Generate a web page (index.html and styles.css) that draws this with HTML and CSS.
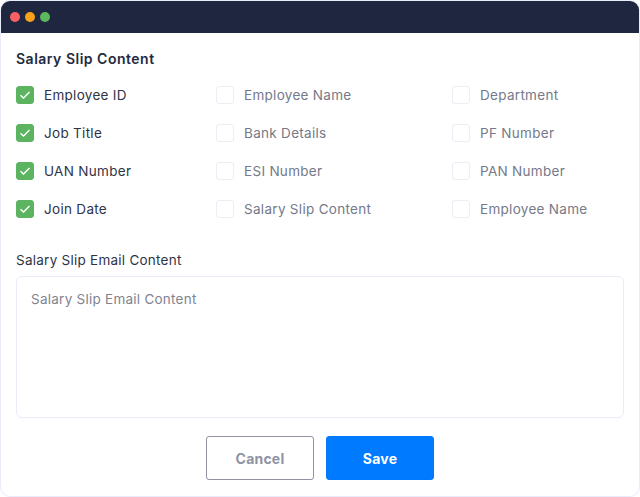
FILE: index.html
```html
<!DOCTYPE html>
<html lang="en">
<head>
  <meta charset="UTF-8" />
  <meta name="viewport" content="width=device-width, initial-scale=1.0"/>
  <title>Salary Slip Content</title>
  <link rel="stylesheet" href="styles.css">
</head>
<body>
  <div class="window">
    <div class="titlebar">
      <span class="dot red"></span>
      <span class="dot yellow"></span>
      <span class="dot green"></span>
    </div>
    <div class="content">
      <h1>Salary Slip Content</h1>

      <div class="options">
        <div class="option on"><span class="box"><svg width="12" height="10" viewBox="0 0 12 10"><path d="M1.5 5.2 4.5 8 10.5 2" fill="none" stroke="#fff" stroke-width="1.4"/></svg></span>Employee ID</div>
        <div class="option"><span class="box"></span>Employee Name</div>
        <div class="option"><span class="box"></span>Department</div>

        <div class="option on"><span class="box"><svg width="12" height="10" viewBox="0 0 12 10"><path d="M1.5 5.2 4.5 8 10.5 2" fill="none" stroke="#fff" stroke-width="1.4"/></svg></span>Job Title</div>
        <div class="option"><span class="box"></span>Bank Details</div>
        <div class="option"><span class="box"></span>PF Number</div>

        <div class="option on"><span class="box"><svg width="12" height="10" viewBox="0 0 12 10"><path d="M1.5 5.2 4.5 8 10.5 2" fill="none" stroke="#fff" stroke-width="1.4"/></svg></span>UAN Number</div>
        <div class="option"><span class="box"></span>ESI Number</div>
        <div class="option"><span class="box"></span>PAN Number</div>

        <div class="option on"><span class="box"><svg width="12" height="10" viewBox="0 0 12 10"><path d="M1.5 5.2 4.5 8 10.5 2" fill="none" stroke="#fff" stroke-width="1.4"/></svg></span>Join Date</div>
        <div class="option"><span class="box"></span>Salary Slip Content</div>
        <div class="option"><span class="box"></span>Employee Name</div>
      </div>

      <label class="email-label" for="email">Salary Slip Email Content</label>
      <textarea id="email" class="email" placeholder="Salary Slip Email Content"></textarea>

      <div class="actions">
        <button class="btn cancel">Cancel</button>
        <button class="btn save">Save</button>
      </div>
    </div>
  </div>
</body>
</html>
```

FILE: styles.css
```css
* { box-sizing: border-box; }
body { margin: 0; background: #fff; font-family: Inter, "Open Sans", sans-serif; color: #2a2f45; }

.window { width: 640px; height: 497px; border: 1px solid #e9ecfa; border-radius: 10px; overflow: hidden; background: #fff; }
.titlebar { height: 32px; background: #1e2640; display: flex; align-items: center; gap: 5px; padding-left: 9px; }
.dot { width: 10px; height: 10px; border-radius: 50%; }
.red { background: #fa5f63; }
.yellow { background: #f9a11b; }
.green { background: #5cb85c; }

.content { padding: 17px 15px 0; }
h1 { margin: 0; font-size: 14px; line-height: 18px; font-weight: 600; color: #232a40; letter-spacing: 0.5px; }

.options { display: grid; grid-template-columns: 200px 236px 1fr; grid-auto-rows: 38px; margin-top: 8px; }
.option { display: flex; align-items: center; gap: 10px; font-size: 13.5px; letter-spacing: 0.3px; color: #757989; }
.option.on { color: #2f3448; }
.box { width: 18px; height: 18px; border: 1px solid #eceef5; border-radius: 3px; display: flex; align-items: center; justify-content: center; }
.on .box { background: #5cb461; border-color: #5cb461; }

.email-label { display: block; margin-top: 23px; font-size: 13.5px; line-height: 18px; letter-spacing: 0.25px; color: #2f3448; }
.email { display: block; width: 608px; height: 142px; margin-top: 7px; padding: 14px; border: 1px solid #e9ecf4; border-radius: 6px; outline: none; resize: none; font-family: inherit; font-size: 13.5px; letter-spacing: 0.25px; color: #757989; }
.email::placeholder { color: #81848f; opacity: 1; }

.actions { display: flex; justify-content: center; gap: 12px; margin-top: 18px; }
.btn { width: 108px; height: 44px; border-radius: 3px; font-family: inherit; font-size: 14px; font-weight: 700; letter-spacing: 0.2px; cursor: pointer; }
.cancel { background: #fff; border: 1px solid #8f93a3; color: #8f93a3; }
.save { background: #007bff; border: 1px solid #007bff; color: #fff; }
```
